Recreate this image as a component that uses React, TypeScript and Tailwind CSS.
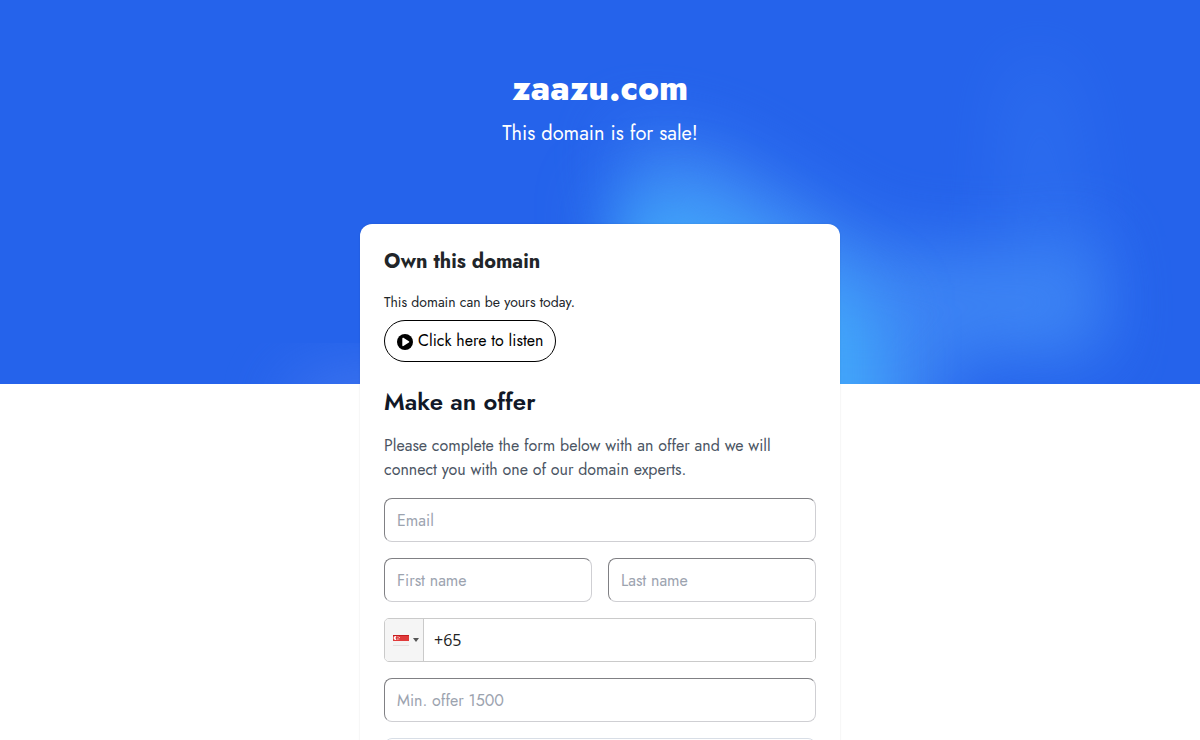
import React from "react";

const field =
  "h-11 w-full min-w-0 rounded-lg border border-t-[#808084] border-l-[#808084] border-r-[#cfcfd3] border-b-[#cfcfd3] bg-white px-3 text-base text-gray-900 placeholder:text-[#9ca3af] outline-none focus:ring-2 focus:ring-blue-500";

function Glow() {
  return (
    <svg
      className="absolute inset-0 h-full w-full"
      viewBox="0 0 1200 384"
      preserveAspectRatio="xMidYMid slice"
      aria-hidden="true"
    >
      <defs>
        <filter id="soft" x="-60%" y="-60%" width="220%" height="220%" colorInterpolationFilters="sRGB">
          <feGaussianBlur stdDeviation="34" />
        </filter>
      </defs>
      <path d="M1010 60 L1065 60 L1110 340 L985 340 Z" fill="#3b82f6" opacity="0.3" filter="url(#soft)" />
      <path
        d="M620 130 L720 150 L880 245 L1020 255 L1095 235 L1100 355 L960 355 L910 480 L700 480 Z"
        fill="#3f87f5"
        opacity="0.9"
        filter="url(#soft)"
      />
      <path d="M605 200 L690 195 L780 250 L880 310 L880 500 L640 500 L640 300 Z" fill="#42a8fa" filter="url(#soft)" />
      <ellipse cx="365" cy="405" rx="80" ry="28" fill="#4f80f2" opacity="0.8" filter="url(#soft)" />
    </svg>
  );
}

function PlayIcon() {
  return (
    <svg className="mt-0.5 h-4 w-4" viewBox="0 0 16 16" aria-hidden="true">
      <circle cx="8" cy="8" r="8" fill="#000" />
      <path d="M5.3 4.400c0-.6.6-.9 1.100-.6l5.500 3.500c.5.300.5 1 0 1.300l-5.500 3.500c-.5.300-1.100 0-1.100-.6z" fill="#fff" />
    </svg>
  );
}

function Flag() {
  return (
    <svg className="h-[11px] w-4" viewBox="0 0 16 11" aria-hidden="true">
      <rect width="16" height="11" fill="#f4f2f2" />
      <rect width="16" height="6" fill="#e03a3a" />
      <rect width="16" height="1" fill="#c51d1f" />
      <rect y="10" width="16" height="1" fill="#e2dfdf" />
      <path d="M3.500 1.200a2 2 0 1 0 0 3.600a2.300 2.300 0 0 1 0-3.600z" fill="#fff" />
      <circle cx="5" cy="1.700" r=".5" fill="#fff" />
      <circle cx="6.300" cy="2.600" r=".5" fill="#fff" />
      <circle cx="5.800" cy="4" r=".5" fill="#fff" />
      <circle cx="4.400" cy="4" r=".5" fill="#fff" />
    </svg>
  );
}

export default function App() {
  return (
    <div className="h-screen overflow-hidden bg-white font-['Jost','Lato',sans-serif]">
      <header className="relative h-96 overflow-hidden bg-[#2563eb] text-center text-white">
        <Glow />
        <div className="relative flex flex-col items-center gap-3 pt-[68px]">
          <h1 className="text-[35px] leading-10 font-extrabold">zaazu.com</h1>
          <p className="text-xl leading-7">This domain is for sale!</p>
        </div>
      </header>

      <main className="relative mx-auto -mt-40 w-full max-w-[480px] rounded-xl bg-white p-6 shadow-[0_0_2px_rgba(0,0,0,0.12)]">
        <h2 className="text-xl leading-7 font-bold text-[#212529]">Own this domain</h2>
        <p className="mt-4 text-sm leading-5 text-[#212529]">This domain can be yours today.</p>
        <button
          type="button"
          className="mt-2 flex h-[42px] items-center gap-[5px] rounded-full border border-black px-3 text-base text-black"
        >
          <PlayIcon />
          Click here to listen
        </button>

        <h2 className="mt-6 text-2xl font-semibold text-[#111827]">Make an offer</h2>
        <p className="mt-4 text-base leading-6 text-[#4b5563]">
          Please complete the form below with an offer and we will connect you with one of our domain experts.
        </p>

        <form className="mt-4 flex flex-col gap-4">
          <input className={field} type="email" aria-label="Email" placeholder="Email" />
          <div className="grid grid-cols-2 gap-4">
            <input className={field} type="text" aria-label="First name" placeholder="First name" />
            <input className={field} type="text" aria-label="Last name" placeholder="Last name" />
          </div>
          <div className="flex h-11 overflow-hidden rounded-[5px] border border-[#cacaca]">
            <button
              type="button"
              aria-label="Country: Singapore"
              className="flex w-[39px] shrink-0 items-center gap-1 border-r border-[#cacaca] bg-[#f5f5f5] pl-2"
            >
              <Flag />
              <svg className="h-1 w-1.5" viewBox="0 0 6 4" aria-hidden="true">
                <path d="M0 0h6L3 4z" fill="#555" />
              </svg>
            </button>
            <input
              className="min-w-0 flex-1 bg-white px-2.5 font-['Open_Sans',sans-serif] text-base text-[#222] outline-none"
              type="tel"
              aria-label="Phone number"
              defaultValue="+65"
            />
          </div>
          <input className={field} type="text" aria-label="Offer" placeholder="Min. offer 1500" />
          <textarea
            className="h-28 w-full rounded-lg border border-[#d8dee6] px-3 py-2 text-base outline-none"
            aria-label="Message"
          />
        </form>
      </main>
    </div>
  );
}
